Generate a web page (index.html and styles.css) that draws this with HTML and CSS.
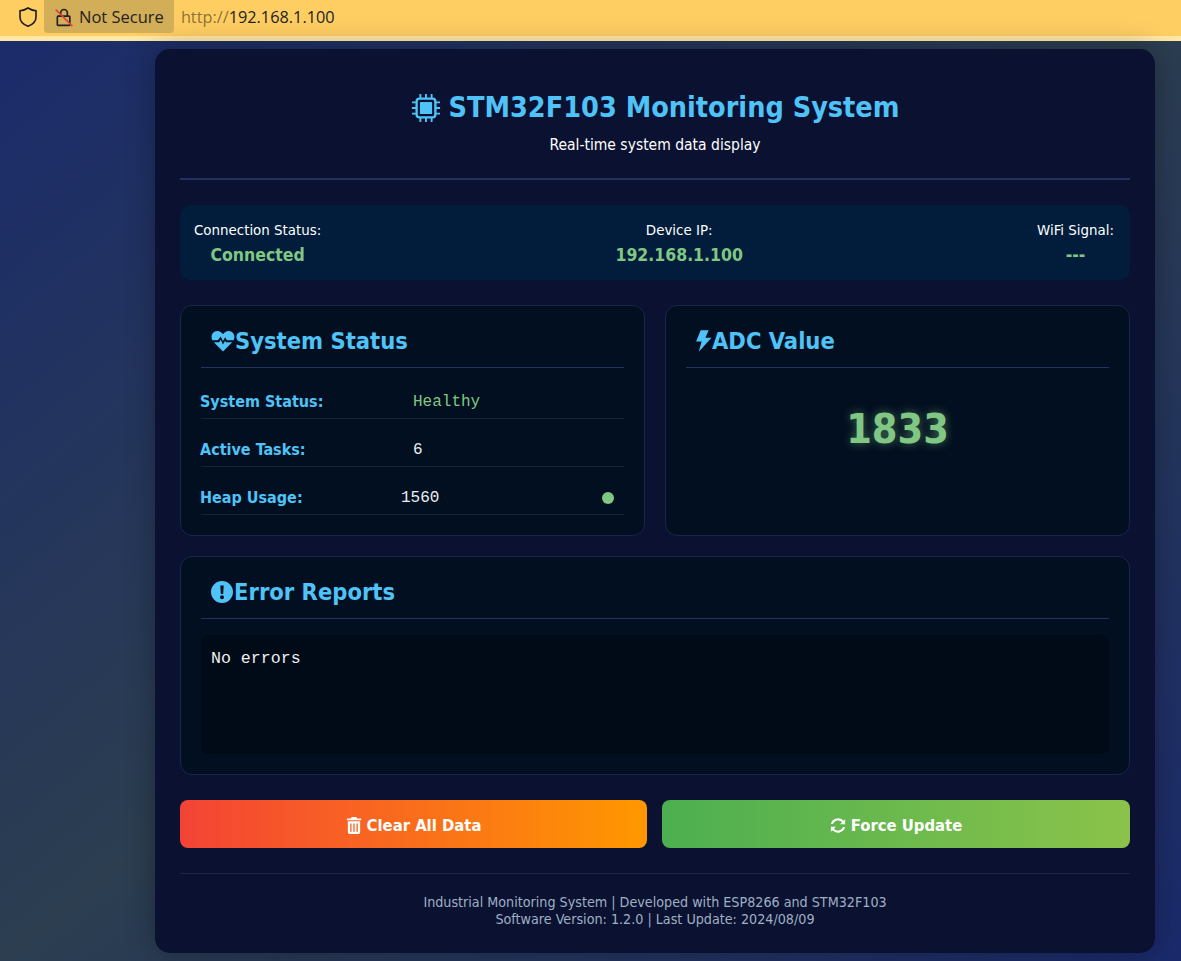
FILE: index.html
```html
<!DOCTYPE html>
<html lang="en">
<head>
  <meta charset="UTF-8">
  <meta name="viewport" content="width=device-width, initial-scale=1.0">
  <title>STM32F103 Monitoring System</title>
  <link rel="stylesheet" href="styles.css">
</head>
<body>
  <!-- Browser address bar -->
  <div class="addr-bar">
    <svg class="shield" viewBox="0 0 24 24"><path d="M12 3c3 2 5 2.600 8 2.800V12c0 4.500-3.200 7.500-8 9.200C7.200 19.500 4 16.500 4 12V5.800C7 5.600 9 5 12 3z"/></svg>
    <div class="not-secure">
      <svg class="lock" viewBox="0 0 24 24">
        <path class="lock-body" d="M5 11h13a1 1 0 0 1 1 1v9a1 1 0 0 1-1 1H5a1 1 0 0 1-1-1v-9a1 1 0 0 1 1-1zM8 11V7a4 4 0 0 1 8 0v4"/>
        <path class="lock-slash" d="M2 3l20 20"/>
      </svg>
      <span>Not Secure</span>
    </div>
    <div class="url"><span class="url-scheme">http://</span>192.168.1.100</div>
  </div>

  <div class="container">
    <header class="page-head">
      <h1>
        <svg class="icon chip" viewBox="0 0 32 32">
          <path d="M10 1v5M16 1v5M22 1v5M10 26v5M16 26v5M22 26v5M1 10h5M1 16h5M1 22h5M26 10h5M26 16h5M26 22h5" stroke="currentColor" stroke-width="2" fill="none"/>
          <rect x="6" y="6" width="20" height="20" rx="3" fill="none" stroke="currentColor" stroke-width="2.500"/>
          <rect x="9.500" y="9.500" width="13" height="13" rx="1" fill="currentColor"/>
        </svg>
        STM32F103 Monitoring System
      </h1>
      <p>Real-time system data display</p>
    </header>

    <!-- Connection strip -->
    <section class="status-bar">
      <div class="status-item">
        <div>Connection Status:</div>
        <div class="status-value">Connected</div>
      </div>
      <div class="status-item">
        <div>Device IP:</div>
        <div class="status-value">192.168.1.100</div>
      </div>
      <div class="status-item">
        <div>WiFi Signal:</div>
        <div class="status-value">---</div>
      </div>
    </section>

    <div class="card-grid">
      <section class="card">
        <h2>
          <svg class="icon heart" viewBox="0 0 24 22"><path d="M12 21.500 2.800 12.300h5.400l1.500-2.500 2.300 4.600 2.100-3.600.8 1.500h6.300zM1.400 10.300C-.8 6.500 1.500 1 6.300 1 8.800 1 10.700 2.300 12 4.200 13.300 2.300 15.200 1 17.700 1c4.800 0 7.100 5.500 4.900 9.300h-6.700l-1.700-3-2.200 3.800-2.300-4.700-2.800 3.900z"/></svg>System Status
        </h2>
        <div class="rows">
          <div class="row">
            <span class="row-label">System Status:</span>
            <span class="row-value healthy">Healthy</span>
          </div>
          <div class="row">
            <span class="row-label">Active Tasks:</span>
            <span class="row-value">6</span>
          </div>
          <div class="row">
            <span class="row-label">Heap Usage:</span>
            <span class="row-value heap">1560</span>
            <span class="dot"></span>
          </div>
        </div>
      </section>

      <section class="card">
        <h2>
          <svg class="icon bolt" viewBox="0 0 18 24"><path d="M6 0.500h8.500L11 8.500h6.500L4 23.500 7 12.500H1.200z"/></svg>ADC Value
        </h2>
        <div class="adc-value">1833</div>
      </section>
    </div>

    <section class="card error-card">
      <h2>
        <svg class="icon alert" viewBox="0 0 24 24"><path fill-rule="evenodd" d="M12 1a11 11 0 1 1 0 22 11 11 0 0 1 0-22zM10.300 5.500l.5 8.500h2.400l.5-8.500zM12 15.200a2 2 0 1 0 0 4 2 2 0 0 0 0-4z"/></svg>Error Reports
      </h2>
      <div class="error-log">No errors</div>
    </section>

    <div class="actions">
      <button type="button" class="btn btn-clear">
        <svg class="btn-icon" viewBox="0 0 16 18"><path fill-rule="evenodd" d="M5.500 0h5l.7 1.500H15.500V3.500H.5V1.500H4.800zM1.500 4.500h13V16.500a1.500 1.500 0 0 1-1.500 1.500H3a1.500 1.500 0 0 1-1.500-1.500zM4 7v8.500h1.400V7zM7.300 7v8.500h1.400V7zM10.600 7v8.500H12V7z"/></svg>
        Clear All Data
      </button>
      <button type="button" class="btn btn-update">
        <svg class="btn-icon" viewBox="0 0 18 18"><path d="M15.200 3.700 17 1.900V7.500h-5.600l2.100-2.100A6 6 0 0 0 3.400 7.200H1A8.300 8.300 0 0 1 15.200 3.700zM1 10.500h5.600l-2.100 2.100a6 6 0 0 0 10.100-1.800H17A8.300 8.300 0 0 1 2.800 14.300L1 16.100z"/></svg>
        Force Update
      </button>
    </div>

    <footer class="page-foot">
      <div>Industrial Monitoring System | Developed with ESP8266 and STM32F103</div>
      <div>Software Version: 1.2.0 | Last Update: 2024/08/09</div>
    </footer>
  </div>
</body>
</html>
```

FILE: styles.css
```css
* {
  box-sizing: border-box;
}

html, body {
  margin: 0;
  height: 100%;
  overflow: hidden;
}

body {
  font-family: "DejaVu Sans Condensed", "DejaVu Sans", sans-serif;
  color: #fff;
  background: linear-gradient(to bottom right, #1a2a6c, #2c3e50, #1a2a6c);
}

/* Address bar */
.addr-bar {
  display: flex;
  align-items: center;
  height: 41px;
  padding: 0 0 2px 16px;
  background: #ffce63;
  border-bottom: 5px solid #ffe7a6;
  font-family: "Open Sans", sans-serif;
  font-size: 16.500px;
  color: #222;
}

.shield {
  width: 24px;
  height: 24px;
  fill: none;
  stroke: #1c1c1c;
  stroke-width: 1.600;
}

.not-secure {
  display: flex;
  align-items: center;
  align-self: flex-start;
  gap: 5px;
  height: 33px;
  margin-left: 4px;
  padding: 0 10px;
  background: #d2ae59;
  border-radius: 0 0 4px 4px;
}

.lock {
  width: 20px;
  height: 20px;
  fill: none;
  stroke-width: 2;
}

.lock-body {
  stroke: #222;
}

.lock-slash {
  stroke: #e0413c;
}

.url {
  margin-left: 7px;
  font-size: 16.300px;
}

.url-scheme {
  color: #8a7336;
}

/* Main panel */
.container {
  width: 1000px;
  height: 904px;
  margin: 8px 0 0 155px;
  padding: 25px;
  background: #0b1131;
  border-radius: 15px;
  box-shadow: 0 0 30px rgba(0, 0, 0, 0.3);
}

.page-head {
  height: 106px;
  padding-top: 16px;
  text-align: center;
  border-bottom: 2px solid #24315f;
}

.page-head h1 {
  display: flex;
  align-items: center;
  justify-content: center;
  gap: 8px;
  margin: 0;
  font-size: 28.500px;
  line-height: 36px;
  color: #4fc3f7;
}

.page-head p {
  margin: 9px 0 0;
  font-size: 15.500px;
  line-height: 20px;
}

.icon {
  flex: none;
  fill: currentColor;
}

.chip {
  width: 30px;
  height: 30px;
}

/* Status strip */
.status-bar {
  display: flex;
  justify-content: space-between;
  height: 75px;
  margin: 25px 0;
  padding: 15px 16px 0 14px;
  background: #011d3b;
  border-radius: 10px;
  font-size: 14.900px;
  line-height: 20px;
}

.status-item {
  text-align: center;
}

.status-value {
  margin-top: 4px;
  font-size: 17.500px;
  line-height: 22px;
  font-weight: bold;
  color: #81c784;
}

/* Cards */
.card-grid {
  display: grid;
  grid-template-columns: 1fr 1fr;
  gap: 20px;
  height: 231px;
}

.card {
  padding: 20px;
  background: #020f20;
  border: 1px solid #17264d;
  border-radius: 12px;
}

.card h2 {
  display: flex;
  align-items: center;
  height: 42px;
  margin: 0;
  padding: 0 0 12px 9px;
  font-size: 23.500px;
  color: #4fc3f7;
  border-bottom: 1px solid #1f3560;
}

.heart {
  width: 24px;
  height: 22px;
  margin-left: 1px;
}

.bolt {
  width: 17px;
  height: 24px;
}

.alert {
  width: 24px;
  height: 24px;
}

.rows {
  margin-top: 3px;
}

.row {
  display: flex;
  align-items: center;
  height: 48px;
  padding-top: 15px;
  border-bottom: 1px solid #14233a;
}

.row-label {
  flex: none;
  width: 213px;
  margin: 0 0 2px -1px;
  font-size: 16px;
  font-weight: bold;
  color: #4fc3f7;
}

.row-value {
  font-family: "Liberation Mono", monospace;
  font-size: 16px;
  color: #e8eef2;
}

.healthy {
  color: #81c784;
}

.heap {
  margin-left: -12px;
}

.dot {
  width: 12px;
  height: 12px;
  margin-left: auto;
  margin-right: 10px;
  border-radius: 50%;
  background: #81c784;
}

.adc-value {
  margin-top: 36px;
  text-align: center;
  font-size: 41px;
  line-height: 50px;
  font-weight: bold;
  color: #81c784;
  text-shadow: 0 0 10px rgba(129, 199, 132, 0.5);
}

.error-card {
  height: 219px;
  margin-top: 20px;
}

.error-log {
  height: 119px;
  margin-top: 16px;
  padding: 14px 10px;
  background: #010b18;
  border-radius: 8px;
  font-family: "Liberation Mono", monospace;
  font-size: 16.600px;
  line-height: 20px;
  color: #f0f0f0;
}

/* Buttons */
.actions {
  display: grid;
  grid-template-columns: 467px 1fr;
  gap: 15px;
  margin-top: 25px;
}

.btn {
  display: flex;
  align-items: center;
  justify-content: center;
  gap: 5px;
  height: 48px;
  padding: 2px 0 0;
  border: none;
  border-radius: 8px;
  font-family: inherit;
  font-size: 16.500px;
  font-weight: bold;
  color: #fff;
}

.btn-icon {
  width: 16px;
  height: 17px;
  fill: #fff;
}

.btn-clear {
  background: linear-gradient(90deg, #f44336, #ff9800);
}

.btn-update {
  background: linear-gradient(90deg, #4caf50, #8bc34a);
}

/* Footer */
.page-foot {
  margin-top: 25px;
  padding-top: 20px;
  border-top: 1px solid #1c2748;
  text-align: center;
  font-size: 14.200px;
  line-height: 17px;
  color: #9fb0c4;
}
```
